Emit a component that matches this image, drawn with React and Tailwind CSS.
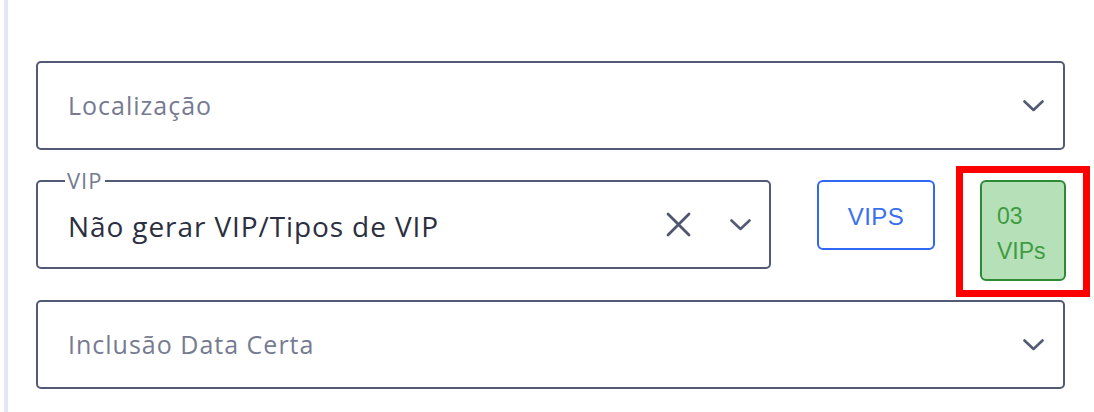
import React from "react";

const font = { fontFamily: '"Open Sans", "Noto Sans", sans-serif' };

const Chevron = () => (
  <svg width="21" height="12" viewBox="0 0 21 12" fill="none">
    <polyline
      points="1.5,1.5 10.5,10 19.5,1.5"
      stroke="#535a74"
      strokeWidth="2.6"
      strokeLinecap="round"
      strokeLinejoin="round"
    />
  </svg>
);

const Cross = () => (
  <svg width="25" height="25" viewBox="0 0 25 25" fill="none">
    <path
      d="M2 2 L23 23 M23 2 L2 23"
      stroke="#4f5670"
      strokeWidth="2.8"
      strokeLinecap="round"
    />
  </svg>
);

const SelectField = ({ placeholder }) => (
  <div className="mr-[1px] h-[89px] border-2 border-[#535a74] rounded-[5px] flex items-center pl-[30px] pr-[19px]">
    <span className="flex-1 text-[25px] text-[#767b91] tracking-[1px]">
      {placeholder}
    </span>
    <Chevron />
  </div>
);

export default function App() {
  return (
    <div
      className="w-[1094px] h-[412px] bg-white flex relative overflow-hidden"
      style={font}
    >
      {/* side rule */}
      <div className="ml-[4px] w-[4px] bg-[#e6e7f5]" />

      <div className="flex-1 pl-[28px] pr-[28px] pt-[61px] flex flex-col">
        <SelectField placeholder="Localização" />

        <div className="mt-[30px] flex items-start">
          {/* VIP select */}
          <div className="relative shrink-0 w-[735px] h-[89px] border-2 border-[#535a74] rounded-[5px] flex items-center pl-[30px] pr-[18px]">
            <span className="absolute left-[27px] -top-[14px] px-[2px] bg-white text-[22px] leading-[24px] tracking-[1px] text-[#767b91]">
              VIP
            </span>
            <span className="flex-1 pt-[3px] text-[28px] text-[#2b2f3f] tracking-[0.9px]">
              Não gerar VIP/Tipos de VIP
            </span>
            <div className="mr-[39px] flex items-center">
              <Cross />
            </div>
            <Chevron />
          </div>

          {/* VIPS button */}
          <button className="shrink-0 ml-[46px] w-[118px] h-[70px] pt-[4px] border-2 border-[#2f68f5] rounded-[6px] flex items-center justify-center text-[24px] tracking-[0.5px] text-[#3a6ff0] bg-white font-['Liberation_Sans',Arial,sans-serif]">
            VIPS
          </button>

          {/* count badge */}
          <div className="shrink-0 ml-[45px] w-[86px] h-[101px] border-2 border-[#2e8b35] rounded-[6px] bg-[#b6e0b7] pl-[15px] pt-[17px] text-[23px] leading-[35px] text-[#3f9c43] font-['Liberation_Sans',Arial,sans-serif]">
            <div>03</div>
            <div>VIPs</div>
          </div>
        </div>

        <div className="mt-[19px]">
          <SelectField placeholder="Inclusão Data Certa" />
        </div>
      </div>

      {/* highlight annotation */}
      <div className="absolute left-[956px] top-[166px] w-[134px] h-[131px] border-[7px] border-[#ff0000]" />
    </div>
  );
}
